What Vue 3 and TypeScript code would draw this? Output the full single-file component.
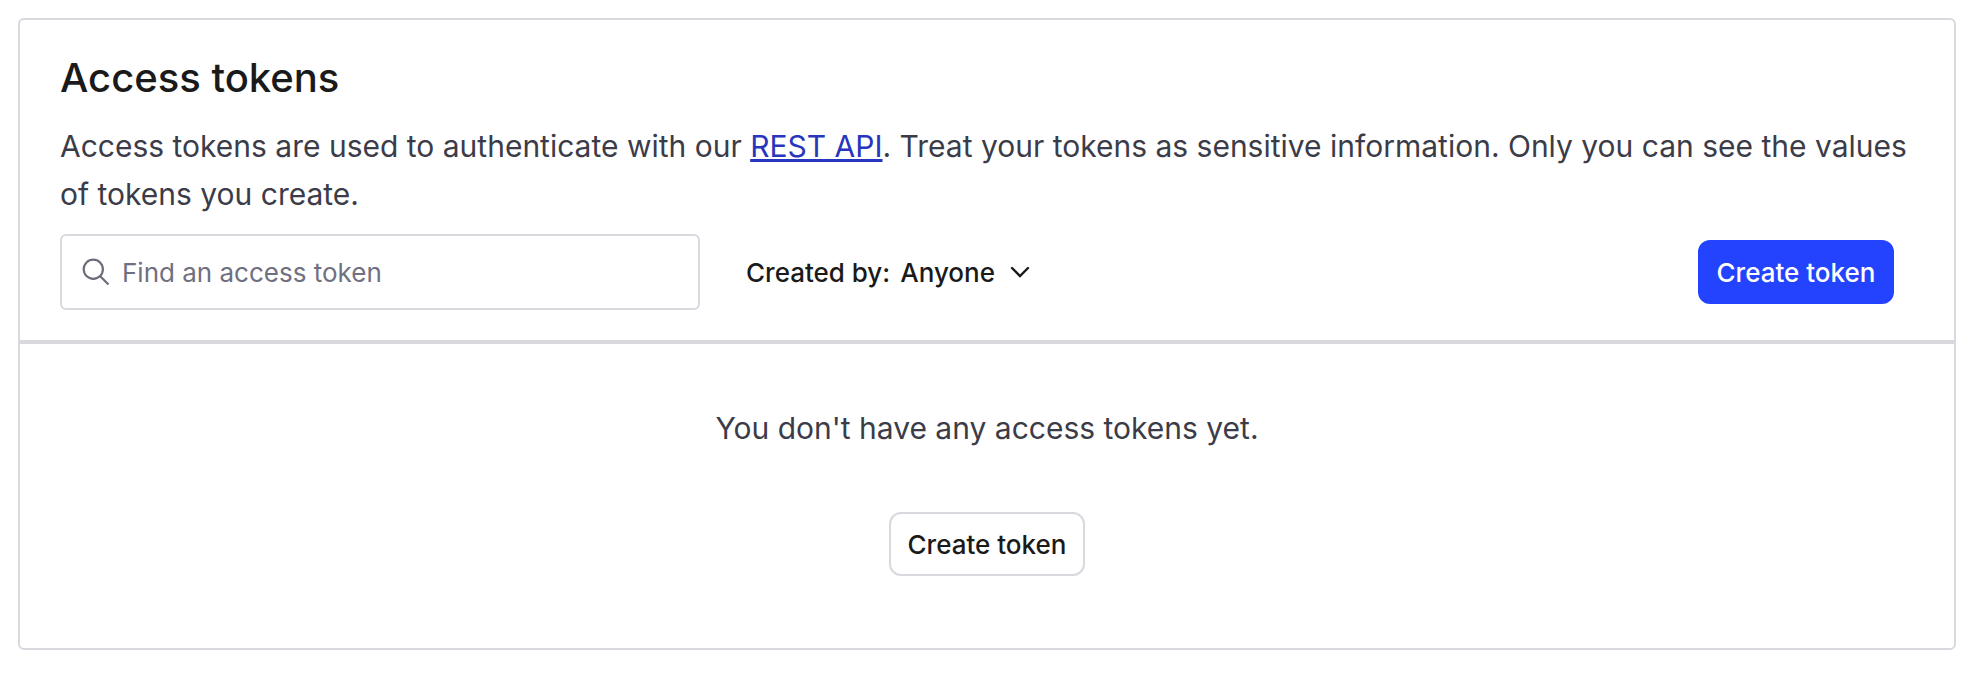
<script setup lang="ts">
import { ref } from 'vue'

const query = ref<string>('')
</script>

<template>
  <main class="page">
    <section class="card" aria-labelledby="tokens-title">
      <header class="head">
        <h1 id="tokens-title">Access tokens</h1>
        <p class="lead">
          Access tokens are used to authenticate with our <a href="#">REST API</a>. Treat your tokens as
          sensitive information. Only you can see the values of tokens you create.
        </p>
        <div class="toolbar">
          <label class="search">
            <svg class="glass" viewBox="0 0 28 28" aria-hidden="true">
              <circle cx="11.3" cy="11.3" r="9.6" />
              <path d="M18 18l8.5 8.5" />
            </svg>
            <input v-model="query" type="text" placeholder="Find an access token" aria-label="Find an access token" />
          </label>
          <button class="filter" type="button">
            <span>Created by:</span>
            <span>Anyone</span>
            <svg class="chevron" viewBox="0 0 20 12" aria-hidden="true">
              <path d="M2 2l8 8 8-8" />
            </svg>
          </button>
          <button class="btn primary" type="button">Create token</button>
        </div>
      </header>
      <div class="empty">
        <p>You don't have any access tokens yet.</p>
        <button class="btn" type="button">Create token</button>
      </div>
    </section>
  </main>
</template>

<style>
body {
  background: #fff;
}
</style>

<style scoped>
.page {
  padding: 18px;
  font-family: Inter, "Liberation Sans", sans-serif;
  color: #3c3c49;
}
.card {
  border: 2px solid #d8d8de;
  border-radius: 6px;
}
.head {
  padding: 32px 40px 30px;
  border-bottom: 4px solid #d8d9dd;
}
h1 {
  margin: 0;
  font-size: 40px;
  line-height: 52px;
  font-weight: 500;
  color: #1a1a1a;
}
.lead {
  margin: 18px 0 16px;
  font-size: 30px;
  line-height: 48px;
}
.lead a {
  color: #2836bd;
  text-decoration: underline;
  text-decoration-thickness: 3px;
}
.toolbar {
  display: flex;
  align-items: center;
}
.search {
  box-sizing: border-box;
  display: flex;
  align-items: center;
  gap: 12px;
  width: 640px;
  height: 76px;
  padding: 0 20px;
  border: 2px solid #d8d8de;
  border-radius: 6px;
}
.glass {
  width: 28px;
  height: 28px;
  fill: none;
  stroke: #6c6c7a;
  stroke-width: 2.2;
}
.search input {
  flex: 1;
  min-width: 0;
  padding: 0;
  border: 0;
  outline: 0;
  background: none;
  font: inherit;
  font-size: 26px;
}
.search input::placeholder {
  color: #6f7080;
  opacity: 1;
}
.filter {
  display: flex;
  align-items: center;
  gap: 10px;
  margin-left: 46px;
  padding: 0;
  border: 0;
  background: none;
  font: inherit;
  font-size: 26px;
  font-weight: 500;
  color: #1a1a1a;
}
.chevron {
  width: 20px;
  height: 12px;
  margin-left: 5px;
  fill: none;
  stroke: currentColor;
  stroke-width: 2.4;
  stroke-linecap: round;
}
.btn {
  box-sizing: border-box;
  min-width: 196px;
  height: 64px;
  padding: 0 16px;
  border: 2px solid #d8d8de;
  border-radius: 12px;
  background: #fff;
  font: inherit;
  font-size: 26px;
  font-weight: 500;
  color: #1a1a1a;
}
.primary {
  margin: 0 20px 0 auto;
  border-color: #2443ff;
  background: #2443ff;
  color: #fff;
}
.empty {
  display: flex;
  flex-direction: column;
  align-items: center;
  gap: 60px;
  padding: 60px 40px 72px;
}
.empty p {
  margin: 0;
  font-size: 30px;
  line-height: 48px;
}
</style>
